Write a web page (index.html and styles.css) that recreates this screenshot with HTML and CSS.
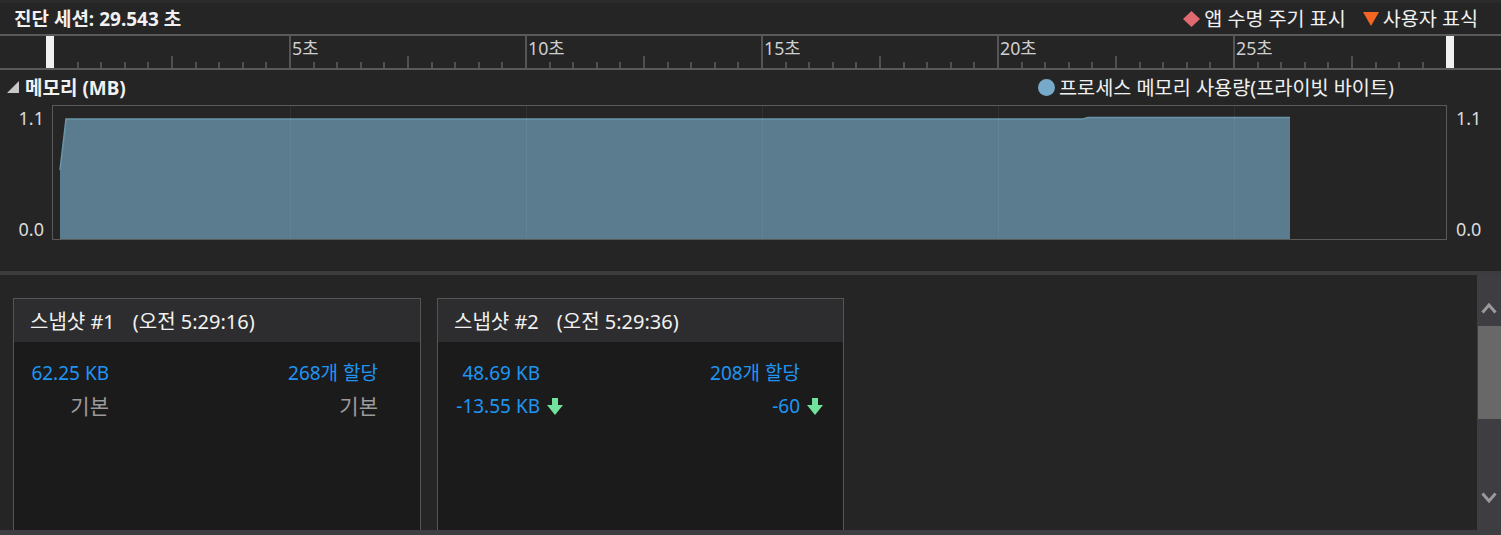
FILE: index.html
```html
<!DOCTYPE html>
<html lang="ko">
<head>
<meta charset="utf-8">
<title>진단 세션</title>
<link rel="stylesheet" href="styles.css">
</head>
<body>
<div class="app">
  <div class="topstrip"></div>
  <header class="header">
    <div class="title">진단 세션: 29.543 초</div>
    <div class="marks">
      <span class="mark"><svg class="mark-icon" width="17" height="16" viewBox="0 0 17 16"><polygon points="8.5,0 17,8 8.5,16 0,8" fill="#e06a6f"/></svg>앱 수명 주기 표시</span>
      <span class="mark"><svg class="mark-icon" width="16" height="14" viewBox="0 0 16 14"><polygon points="0,0 16,0 8,14" fill="#f26522"/></svg>사용자 표식</span>
    </div>
  </header>

  <div class="ruler">
    <svg class="ruler-ticks" width="1501" height="32" viewBox="0 0 1501 32">
      <path d="M78 26V32M101 26V32M125 26V32M148 26V32M196 26V32M219 26V32M243 26V32M266 26V32M314 26V32M337 26V32M361 26V32M384 26V32M432 26V32M455 26V32M479 26V32M502 26V32M550 26V32M573 26V32M597 26V32M620 26V32M668 26V32M691 26V32M715 26V32M738 26V32M786 26V32M809 26V32M833 26V32M856 26V32M904 26V32M927 26V32M951 26V32M974 26V32M1022 26V32M1045 26V32M1069 26V32M1092 26V32M1140 26V32M1163 26V32M1187 26V32M1210 26V32M1258 26V32M1281 26V32M1305 26V32M1328 26V32M1376 26V32M1399 26V32M1423 26V32" stroke="#505050" stroke-width="2" fill="none"/>
      <path d="M172 20V32M408 20V32M644 20V32M880 20V32M1116 20V32M1352 20V32" stroke="#505050" stroke-width="2" fill="none"/>
      <path d="M290 0V32M526 0V32M762 0V32M998 0V32M1234 0V32" stroke="#555" stroke-width="2" fill="none"/>
    </svg>
    <span class="handle" style="left:46px"></span>
    <span class="handle" style="left:1446px"></span>
    <span class="tick-label" style="left:292px">5초</span>
    <span class="tick-label" style="left:528px">10초</span>
    <span class="tick-label" style="left:764px">15초</span>
    <span class="tick-label" style="left:1000px">20초</span>
    <span class="tick-label" style="left:1236px">25초</span>
  </div>

  <section class="memory">
    <div class="mem-head">
      <div class="mem-title">
        <svg class="collapse" width="12" height="12" viewBox="0 0 12 12"><polygon points="12,0 12,12 0,12" fill="#c8c8c8"/></svg>
        <span>메모리 (MB)</span>
      </div>
      <div class="mem-legend"><span class="dot"></span>프로세스 메모리 사용량(프라이빗 바이트)</div>
    </div>
    <div class="chart-row">
      <div class="yaxis yaxis-left"><span>1.1</span><span>0.0</span></div>
      <div class="chart">
        <svg class="plot" width="1393" height="133" viewBox="0 0 1393 133">
          <polygon points="7,133 7,64 13,13 1030,13 1035,11.5 1237,11.5 1237,133" fill="#5a7c8e"/>
          <polyline points="7,64 13,13 1030,13 1035,11.5 1237,11.5" fill="none" stroke="#6a95ab" stroke-width="1.5"/>
          <path d="M237.5 0V133M473.5 0V133M709.5 0V133M945.5 0V133M1181.5 0V133" stroke="rgba(255,255,255,0.06)" stroke-width="1"/>
        </svg>
      </div>
      <div class="yaxis yaxis-right"><span>1.1</span><span>0.0</span></div>
    </div>
  </section>

  <div class="sep"></div>

  <section class="snapshots">
    <div class="cards">
      <article class="card">
        <div class="card-head"><span>스냅샷 #1</span><span class="time">(오전 5:29:16)</span></div>
        <div class="card-body stats-1">
          <span class="val">62.25 KB</span>
          <span class="val">268개 할당</span>
          <span class="base">기본</span>
          <span class="base">기본</span>
        </div>
      </article>
      <article class="card card-2">
        <div class="card-head"><span>스냅샷 #2</span><span class="time">(오전 5:29:36)</span></div>
        <div class="card-body stats-2">
          <span class="val">48.69 KB</span>
          <span></span>
          <span class="val">208개 할당</span>
          <span></span>
          <span class="val">-13.55 KB</span>
          <svg class="down" width="16" height="17" viewBox="0 0 16 17"><polygon points="5,0 11,0 11,7 16,7 8,17 0,7 5,7" fill="#72e39c"/></svg>
          <span class="val">-60</span>
          <svg class="down" width="16" height="17" viewBox="0 0 16 17"><polygon points="5,0 11,0 11,7 16,7 8,17 0,7 5,7" fill="#72e39c"/></svg>
        </div>
      </article>
    </div>
    <div class="vscroll">
      <svg class="chev" width="16" height="12" viewBox="0 0 16 12"><polyline points="1.5,10.5 8,3 14.5,10.5" fill="none" stroke="#9a9a9a" stroke-width="3"/></svg>
      <div class="thumb-track"><div class="thumb"></div></div>
      <svg class="chev" width="16" height="12" viewBox="0 0 16 12"><polyline points="1.5,1.5 8,9 14.5,1.5" fill="none" stroke="#9a9a9a" stroke-width="3"/></svg>
    </div>
  </section>

  <div class="hscroll"></div>
</div>
</body>
</html>
```

FILE: styles.css
```css
* { box-sizing: border-box; }
html, body { margin: 0; padding: 0; }
body {
  width: 1501px;
  height: 535px;
  overflow: hidden;
  background: #252526;
  color: #f1f1f1;
  font-family: "Segoe UI", "Noto Sans", "Noto Sans CJK KR", sans-serif;
}
.app { display: flex; flex-direction: column; height: 535px; }

.topstrip { height: 3px; background: #2b2b2c; flex: none; }

.header {
  height: 31px;
  flex: none;
  display: flex;
  align-items: center;
  justify-content: space-between;
  padding: 0 23px 0 14px;
  line-height: 24px;
}
.title { font-size: 19px; font-weight: 700; }
.marks { display: flex; gap: 17px; font-size: 19.6px; }
.mark { display: flex; align-items: center; gap: 4px; }
.mark-icon { display: block; }

.ruler {
  position: relative;
  height: 36px;
  flex: none;
  border-top: 2px solid #5a5a5a;
  border-bottom: 2px solid #5a5a5a;
}
.ruler-ticks { position: absolute; left: 0; top: 0; display: block; }
.handle {
  position: absolute;
  top: 0;
  width: 8px;
  height: 32px;
  background: #f1f1f1;
}
.tick-label {
  position: absolute;
  top: 1px;
  font-size: 17.8px;
  line-height: 22px;
  color: #cfcfcf;
}

.memory { height: 201px; flex: none; }
.mem-head {
  height: 35px;
  display: flex;
  align-items: center;
  justify-content: space-between;
  padding: 0 107px 0 7px;
  line-height: 24px;
}
.mem-title { display: flex; align-items: center; gap: 6px; font-weight: 700; font-size: 19px; }
.collapse { display: block; margin-top: -2px; }
.mem-legend { display: flex; align-items: center; gap: 4px; font-size: 19.7px; }
.dot { width: 17px; height: 17px; border-radius: 50%; background: #77aac8; }

.chart-row { display: flex; height: 135px; }
.yaxis {
  display: flex;
  flex-direction: column;
  justify-content: space-between;
  font-size: 18px;
  line-height: 22px;
  color: #dcdcdc;
  padding: 2px 0 0;
}
.yaxis-left { width: 52px; align-items: flex-end; padding-right: 8px; }
.yaxis-right { width: 54px; padding-left: 9px; }
.chart {
  width: 1395px;
  border: 1px solid #5a5a5a;
  background: #252526;
}
.plot { display: block; }

.sep { height: 4px; flex: none; background: #3c3c3f; }

.snapshots {
  height: 255px;
  flex: none;
  display: flex;
  overflow: hidden;
}
.cards {
  flex: 1;
  display: flex;
  gap: 16px;
  padding: 23px 0 0 13px;
}
.card {
  width: 408px;
  height: 260px;
  border: 1px solid #555;
  background: #1b1b1c;
  flex: none;
}
.card-2 { width: 407px; }
.card-head {
  height: 43px;
  background: #2d2d30;
  display: flex;
  align-items: center;
  gap: 18px;
  padding-left: 16px;
  font-size: 20px;
  color: #f1f1f1;
}
.card-body {
  display: grid;
  row-gap: 9px;
  padding-top: 19px;
  font-size: 19px;
  line-height: 24px;
  justify-items: end;
  align-items: center;
}
.stats-1 { grid-template-columns: 95px 269px; }
.stats-2 { grid-template-columns: 102px 23px 237px 23px; }
.val { color: #1f95f3; }
.base { color: #9b9b9b; font-size: 21px; }
.down { justify-self: start; margin-left: 7px; display: block; }

.vscroll {
  width: 24px;
  flex: none;
  background: #3e3e42;
  display: flex;
  flex-direction: column;
  align-items: center;
}
.chev { display: block; flex: none; margin: 27px 0 12px; }
.vscroll .chev:last-child { margin: 12px 0 26px; }
.thumb-track { flex: 1; width: 100%; padding: 0 0 0 1px; }
.thumb { height: 93px; background: #686868; }

.hscroll { height: 5px; flex: none; background: #3e3e42; }
```
